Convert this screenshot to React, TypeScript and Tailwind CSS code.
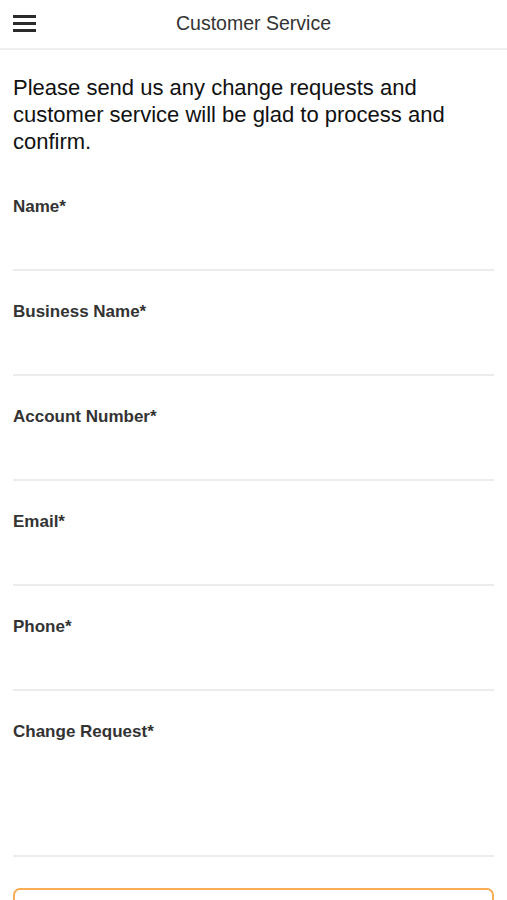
const fields = ['Name*', 'Business Name*', 'Account Number*', 'Email*', 'Phone*']

function Field({ label, tall }: { label: string; tall?: boolean }) {
  return (
    <div className="mt-[32px] first:mt-0">
      <label className="block text-[17px] leading-[18px] font-bold text-[#333]">{label}</label>
      <div className={`${tall ? 'h-[116px]' : 'h-[55px]'} border-b-2 border-[#ececec]`} />
    </div>
  )
}

export default function App() {
  return (
    <div className="h-[900px] overflow-hidden bg-white font-['Liberation_Sans',Arial,sans-serif]">
      <header className="relative h-[50px] border-b-2 border-[#efefef] flex items-center justify-center">
        <button className="absolute left-[13px] top-[15px] flex flex-col gap-[4px]">
          <span className="block w-[23px] h-[3px] bg-[#2a2a2a]" />
          <span className="block w-[23px] h-[3px] bg-[#2a2a2a]" />
          <span className="block w-[23px] h-[3px] bg-[#2a2a2a]" />
        </button>
        <h1 className="text-[19.5px] text-[#333]">Customer Service</h1>
      </header>

      <main className="px-[13px]">
        <p className="mt-[24px] text-[22px] leading-[27px] text-[#111]">
          Please send us any change requests and customer service will be glad to process and confirm.
        </p>

        <form className="mt-[43px]">
          {fields.map((f) => (
            <Field key={f} label={f} />
          ))}
          <Field label="Change Request*" tall />
          {/* submit button: only its top edge is in view */}
          <button
            type="button"
            aria-label="Submit"
            className="mt-[31px] w-full h-[48px] rounded-[7px] border-2 border-[#f8ad55]"
          />
        </form>
      </main>
    </div>
  )
}
